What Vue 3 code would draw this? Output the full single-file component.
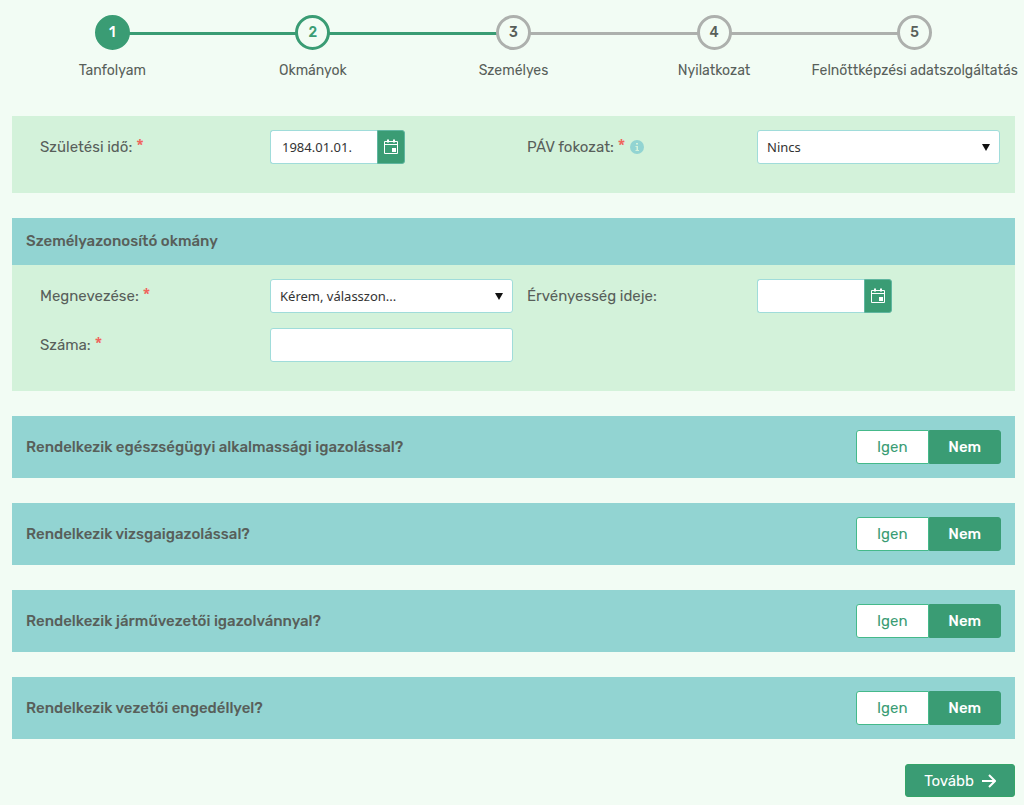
<script setup>
import { reactive } from 'vue'

const steps = [
  { label: 'Tanfolyam', state: 'active' },
  { label: 'Okmányok', state: 'done' },
  { label: 'Személyes', state: 'next' },
  { label: 'Nyilatkozat', state: 'todo' },
  { label: 'Felnőttképzési adatszolgáltatás', state: 'todo' },
]

const questions = reactive([
  { id: 'eu', text: 'Rendelkezik egészségügyi alkalmassági igazolással?', answer: false },
  { id: 'vizsga', text: 'Rendelkezik vizsgaigazolással?', answer: false },
  { id: 'jarmu', text: 'Rendelkezik járművezetői igazolvánnyal?', answer: false },
  { id: 'vezetoi', text: 'Rendelkezik vezetői engedéllyel?', answer: false },
])

const form = reactive({ birth: '1984.01.01.', pav: 'Nincs', docType: '', expiry: '', docNumber: '' })
</script>

<template>
  <main class="page">
    <ol class="stepper">
      <li v-for="(step, i) in steps" :key="step.label" class="step" :class="step.state">
        <span class="circle">{{ i + 1 }}</span>
        <span class="step-label">{{ step.label }}</span>
      </li>
    </ol>

    <form class="form" @submit.prevent>
      <section class="card">
        <div class="fields">
          <label class="label" for="birth">Születési idő: <span class="req">*</span></label>
          <div class="date">
            <input id="birth" v-model="form.birth" class="date-input" type="text" />
            <button class="date-button" type="button" aria-label="Naptár">
              <svg viewBox="0 0 16 16" width="16" height="16" fill="none" stroke="currentColor">
                <path d="M1.5 2.5h13v12h-13zM1.5 5.5h13" />
                <path d="M5 .5v3M11 .5v3" stroke-width="2" />
                <path d="M9 9h4v4H9z" fill="currentColor" stroke="none" />
              </svg>
            </button>
          </div>
          <label class="label" for="pav">PÁV fokozat: <span class="req">*</span>
            <svg class="info" viewBox="0 0 14 14" width="14" height="14">
              <circle cx="7" cy="7" r="7" fill="#92d4d2" />
              <path d="M6 3h2v1.500H6zM5.500 6H8v4h1v1H5.500v-1h1V7h-1z" fill="#d3f2da" />
            </svg>
          </label>
          <div class="select-wrap">
            <select id="pav" v-model="form.pav" class="control">
              <option>Nincs</option>
            </select>
            <svg class="caret" viewBox="0 0 8 7" width="8" height="7"><path d="M0 0h8L4 7z" fill="#111" /></svg>
          </div>
        </div>
      </section>

      <section class="card">
        <h2 class="card-title">Személyazonosító okmány</h2>
        <div class="fields">
          <label class="label" for="doc-type">Megnevezése: <span class="req">*</span></label>
          <div class="select-wrap">
            <select id="doc-type" v-model="form.docType" class="control">
              <option value="">Kérem, válasszon...</option>
            </select>
            <svg class="caret" viewBox="0 0 8 7" width="8" height="7"><path d="M0 0h8L4 7z" fill="#111" /></svg>
          </div>
          <label class="label" for="expiry">Érvényesség ideje:</label>
          <div class="date">
            <input id="expiry" v-model="form.expiry" class="date-input" type="text" />
            <button class="date-button" type="button" aria-label="Naptár">
              <svg viewBox="0 0 16 16" width="16" height="16" fill="none" stroke="currentColor">
                <path d="M1.5 2.5h13v12h-13zM1.5 5.5h13" />
                <path d="M5 .5v3M11 .5v3" stroke-width="2" />
                <path d="M9 9h4v4H9z" fill="currentColor" stroke="none" />
              </svg>
            </button>
          </div>
          <label class="label" for="doc-number">Száma: <span class="req">*</span></label>
          <input id="doc-number" v-model="form.docNumber" class="control" type="text" />
        </div>
      </section>

      <section v-for="q in questions" :key="q.id" class="question">
        <h2 :id="q.id" class="question-text">{{ q.text }}</h2>
        <div class="toggle" role="group" :aria-labelledby="q.id">
          <button type="button" :class="{ on: q.answer }" :aria-pressed="q.answer" @click="q.answer = true">Igen</button>
          <button type="button" :class="{ on: !q.answer }" :aria-pressed="!q.answer" @click="q.answer = false">Nem</button>
        </div>
      </section>

      <button class="submit" type="submit">
        Tovább
        <svg viewBox="0 0 14 14" width="14" height="14" fill="none" stroke="currentColor" stroke-width="2">
          <path d="M0 7h12.500M7 1l6 6-6 6" />
        </svg>
      </button>
    </form>
  </main>
</template>

<style>
body {
  background: #f2fcf4;
}
</style>

<style scoped>
.page {
  box-sizing: border-box;
  padding: 15px 9px 8px 12px;
  font-family: Rubik, Roboto, "Liberation Sans", sans-serif;
  font-size: 15px;
  line-height: 20px;
  color: #585f5a;
}
.stepper {
  display: grid;
  grid-template-columns: repeat(5, minmax(0, 1fr));
  margin: 0 0 36px;
  padding: 0;
  list-style: none;
}
.step {
  position: relative;
  display: flex;
  flex-direction: column;
  align-items: center;
  gap: 12px;
}
.step + .step::before {
  content: "";
  position: absolute;
  top: 17px;
  right: 50%;
  width: 100%;
  height: 3px;
  background: #adb0ad;
}
.step.done::before,
.step.next::before {
  background: #3a9c74;
}
.circle {
  position: relative;
  z-index: 1;
  box-sizing: border-box;
  width: 35px;
  height: 35px;
  border: 3px solid #adb0ad;
  border-radius: 50%;
  background: #f2fcf4;
  font-size: 14px;
  font-weight: 500;
  line-height: 29px;
  text-align: center;
}
.active .circle {
  border-color: #3a9c74;
  background: #3a9c74;
  color: #fff;
}
.done .circle {
  border-color: #3a9c74;
  color: #3a9c74;
}
.step:nth-child(1) {
  z-index: 5;
}
.step:nth-child(2) {
  z-index: 4;
}
.step:nth-child(3) {
  z-index: 3;
}
.step:nth-child(4) {
  z-index: 2;
}
.step-label {
  font-size: 14px;
  line-height: 18px;
  white-space: nowrap;
}
.form {
  display: flex;
  flex-direction: column;
  gap: 25px;
}
.card {
  background: #d3f2da;
}
.card-title {
  margin: 0;
  padding: 13px 14px 14px;
  background: #92d4d2;
  font-size: 15px;
  font-weight: 500;
  line-height: 20px;
}
.fields {
  display: grid;
  grid-template-columns: 216fr 243fr 216fr 243fr;
  gap: 15px 14px;
  padding: 14px 15px 29px 28px;
}
.label {
  padding-top: 7px;
  line-height: 20px;
}
.req {
  color: #f0625a;
  font-size: 18px;
  line-height: 16px;
}
.info {
  margin-left: 4px;
  vertical-align: -2px;
}
.control,
.date-input {
  box-sizing: border-box;
  width: 100%;
  height: 34px;
  margin: 0;
  padding: 0 9px;
  border: 1px solid #a0dcda;
  border-radius: 3px;
  background: #fff;
  color: #333;
  font-family: "Segoe UI", "Noto Sans", sans-serif;
  font-size: 13px;
}
select.control {
  appearance: none;
}
.select-wrap {
  position: relative;
}
.caret {
  position: absolute;
  top: 14px;
  right: 10px;
  pointer-events: none;
}
.date {
  display: flex;
  width: 135px;
}
.date-input {
  flex: 1;
  min-width: 0;
  padding: 0 11px;
  border-right: 0;
  border-radius: 3px 0 0 3px;
}
.date-button {
  display: flex;
  align-items: center;
  justify-content: center;
  width: 28px;
  height: 34px;
  padding: 0;
  border: 1px solid #5fb6a0;
  border-radius: 0 3px 3px 0;
  background: #3a9c74;
  color: #fff;
}
.question {
  display: flex;
  align-items: center;
  justify-content: space-between;
  padding: 14px;
  background: #92d4d2;
}
.question-text {
  margin: 0;
  font-size: 15px;
  font-weight: 500;
  line-height: 20px;
}
.toggle {
  display: flex;
  width: 145px;
}
.toggle button {
  flex: 1;
  height: 34px;
  padding: 0;
  border: 1px solid #45b98a;
  border-radius: 3px 0 0 3px;
  background: #fff;
  color: #3a9c74;
  font-family: inherit;
  font-size: 15px;
}
.toggle button + button {
  border-radius: 0 3px 3px 0;
}
.toggle .on {
  border-color: #3a9c74;
  background: #3a9c74;
  color: #fff;
  font-weight: 500;
}
.submit {
  display: flex;
  align-items: center;
  align-self: flex-end;
  justify-content: center;
  gap: 8px;
  width: 110px;
  height: 33px;
  padding: 0;
  border: 1px solid #35a468;
  border-radius: 3px;
  background: #3a9c74;
  color: #fff;
  font-family: inherit;
  font-size: 15px;
}
</style>
